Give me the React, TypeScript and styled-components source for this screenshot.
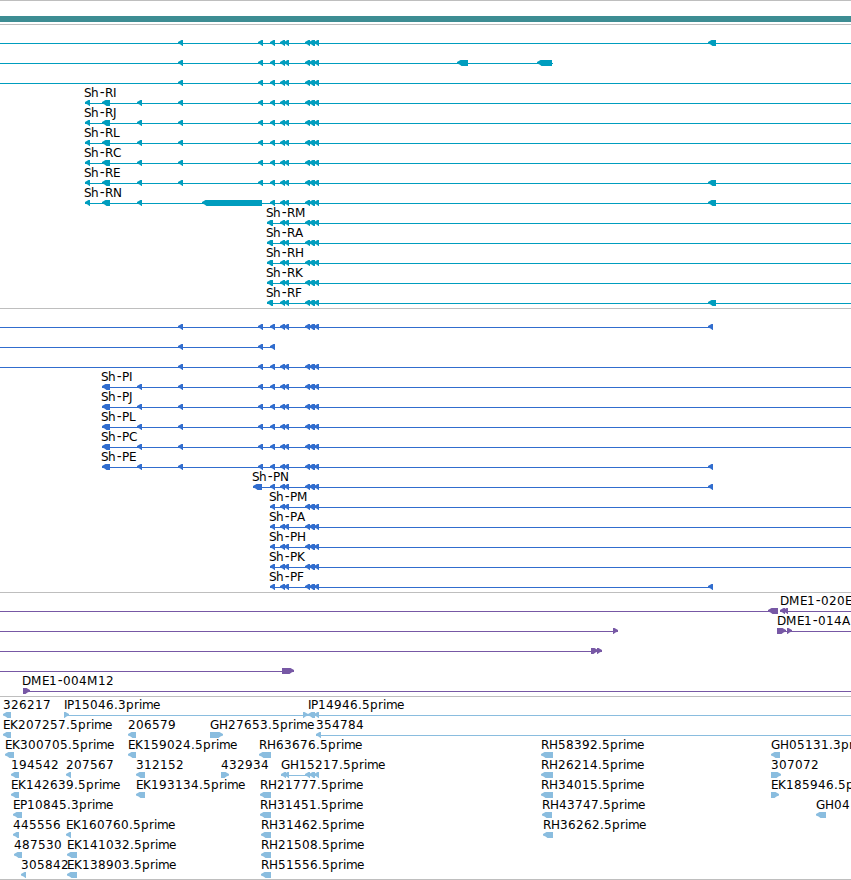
import React, { ReactElement } from 'react';
import styled, { createGlobalStyle } from 'styled-components';

type Span = [number, number];

interface Feature {
    label?: string;
    labelX?: number;
    from: number;
    to: number;
    forward?: boolean;
    exons: Span[];
}

type RowData = Feature[];

const VIEW_WIDTH = 851;
const ROW_HEIGHT = 20;

const TRIPLE: Span[] = [
    [305, 310],
    [309, 315],
    [314, 319],
];
const PAIR: Span[] = [
    [280, 285],
    [284, 289],
];
const TAIL: Span[] = [...PAIR, ...TRIPLE];
const CORE: Span[] = [[258, 263], [270, 275], ...TAIL];
const LONG: Span[] = [[178, 183], ...CORE];

const transcript = (
    label: string | undefined,
    from: number,
    to: number,
    exons: Span[]
): RowData => [{ label, labelX: from - 1, from, to, exons }];

const hit = (
    label: string,
    from: number,
    to: number,
    forward = false
): Feature => ({ label, from, to, forward, exons: [[from, to]] });

const RNA_HEAD: Span[] = [
    [85, 90],
    [102, 110],
    [137, 142],
];
const PROTEIN_HEAD: Span[] = [
    [102, 110],
    [137, 142],
];

const transcripts: RowData[] = [
    transcript(undefined, 0, VIEW_WIDTH, [...LONG, [708, 716]]),
    transcript(undefined, 0, 553, [...LONG, [457, 468], [537, 552]]),
    transcript(undefined, 0, VIEW_WIDTH, LONG),
    ...['Sh-RI', 'Sh-RJ', 'Sh-RL', 'Sh-RC'].map((name) =>
        transcript(name, 85, VIEW_WIDTH, [...RNA_HEAD, ...LONG])
    ),
    transcript('Sh-RE', 85, VIEW_WIDTH, [...RNA_HEAD, ...LONG, [708, 716]]),
    transcript('Sh-RN', 85, VIEW_WIDTH, [
        ...RNA_HEAD,
        [202, 262],
        [270, 275],
        ...TAIL,
        [708, 716],
    ]),
    ...['Sh-RM', 'Sh-RA', 'Sh-RH', 'Sh-RK'].map((name) =>
        transcript(name, 267, VIEW_WIDTH, [[267, 273], ...TAIL])
    ),
    transcript('Sh-RF', 267, VIEW_WIDTH, [[267, 273], ...TAIL, [708, 716]]),
];

const proteins: RowData[] = [
    transcript(undefined, 0, 713, [...LONG, [708, 713]]),
    transcript(undefined, 0, 275, [
        [178, 183],
        [258, 263],
        [270, 275],
    ]),
    transcript(undefined, 0, VIEW_WIDTH, LONG),
    ...['Sh-PI', 'Sh-PJ', 'Sh-PL', 'Sh-PC'].map((name) =>
        transcript(name, 102, VIEW_WIDTH, [...PROTEIN_HEAD, ...LONG])
    ),
    transcript('Sh-PE', 102, 713, [...PROTEIN_HEAD, ...LONG, [708, 713]]),
    transcript('Sh-PN', 253, 713, [
        [253, 262],
        [270, 275],
        ...TAIL,
        [708, 713],
    ]),
    ...['Sh-PM', 'Sh-PA', 'Sh-PH', 'Sh-PK'].map((name) =>
        transcript(name, 270, VIEW_WIDTH, [[270, 275], ...TAIL])
    ),
    transcript('Sh-PF', 270, 713, [[270, 275], ...TAIL, [708, 713]]),
];

const probes: RowData[] = [
    [
        { from: 0, to: 778, exons: [[768, 778]] },
        {
            label: 'DME1-020E',
            from: 780,
            to: VIEW_WIDTH,
            exons: [
                [780, 785],
                [783, 788],
            ],
        },
    ],
    [
        { from: 0, to: 618, forward: true, exons: [[613, 618]] },
        {
            label: 'DME1-014A',
            from: 777,
            to: VIEW_WIDTH,
            forward: true,
            exons: [
                [777, 786],
                [787, 792],
            ],
        },
    ],
    [
        {
            from: 0,
            to: 602,
            forward: true,
            exons: [
                [591, 598],
                [597, 602],
            ],
        },
    ],
    [{ from: 0, to: 294, forward: true, exons: [[282, 294]] }],
    [
        {
            label: 'DME1-004M12',
            labelX: 22,
            from: 23,
            to: VIEW_WIDTH,
            forward: true,
            exons: [[23, 30]],
        },
    ],
];

const ests: RowData[] = [
    [
        hit('326217', 3, 11),
        {
            label: 'IP15046.3prime',
            from: 64,
            to: 308,
            forward: true,
            exons: [
                [64, 69],
                [303, 308],
            ],
        },
        {
            label: 'IP14946.5prime',
            from: 308,
            to: VIEW_WIDTH,
            exons: [
                [308, 315],
                [314, 319],
            ],
        },
    ],
    [
        hit('EK207257.5prime', 3, 11),
        hit('206579', 128, 136),
        hit('GH27653.5prime', 210, 223, true),
        { label: '354784', from: 316, to: VIEW_WIDTH, exons: [[316, 321]] },
    ],
    [
        hit('EK300705.5prime', 5, 14),
        hit('EK159024.5prime', 128, 136),
        hit('RH63676.5prime', 259, 271),
        hit('RH58392.5prime', 541, 553),
        hit('GH05131.3prime', 771, 780),
    ],
    [
        hit('194542', 11, 19),
        hit('207567', 66, 71),
        hit('312152', 136, 145),
        hit('432934', 221, 229, true),
        {
            label: 'GH15217.5prime',
            from: 281,
            to: 319,
            exons: [[281, 286], [284, 289], ...TRIPLE],
        },
        hit('RH26214.5prime', 541, 553),
        hit('307072', 771, 781, true),
    ],
    [
        hit('EK142639.5prime', 11, 19),
        hit('EK193134.5prime', 136, 145),
        hit('RH21777.5prime', 260, 271),
        hit('RH34015.5prime', 541, 553),
        hit('EK185946.5prime', 771, 779, true),
    ],
    [
        hit('EP10845.3prime', 13, 22),
        hit('RH31451.5prime', 260, 271),
        hit('RH43747.5prime', 542, 552),
        hit('GH04', 816, 826),
    ],
    [
        hit('445556', 13, 19),
        hit('EK160760.5prime', 66, 71),
        hit('RH31462.5prime', 261, 271),
        hit('RH36262.5prime', 543, 553),
    ],
    [
        hit('487530', 14, 22),
        hit('EK141032.5prime', 67, 77),
        hit('RH21508.5prime', 261, 271),
    ],
    [
        hit('305842', 21, 26),
        hit('EK138903.5prime', 67, 77),
        hit('RH51556.5prime', 261, 271),
    ],
];

// Whole pixel advances, so that every glyph starts on a pixel boundary
const ADVANCES: Record<string, number> = {
    '-': 6,
    '.': 4,
    D: 9,
    E: 7,
    G: 9,
    H: 9,
    I: 3,
    M: 11,
    P: 7,
    S: 7,
    e: 7,
    i: 3,
    m: 11,
    r: 5,
};

const glyphPositions = (label: string, start: number): string => {
    let x = start;
    return label
        .split('')
        .map((char) => {
            const current = x;
            x += ADVANCES[char] ?? 8;
            return char === '-' ? current - 1 : current;
        })
        .join(' ');
};

const arrowPoints = ([start, end]: Span, forward?: boolean): string => {
    const tip = forward ? end : start;
    const base = forward ? start : end;
    const dir = forward ? -1 : 1;
    const at = (offset: number): number => tip + dir * offset;
    return [
        `${at(0)},16`,
        `${at(3.5)},14`,
        `${base},14`,
        `${base},20`,
        `${at(4.5)},20`,
        `${at(2.5)},18.5`,
        `${at(0)},17.6`,
    ].join(' ');
};

/**
 * One line of features: the intron line, the exons as arrows and the name
 *
 * @returns {ReactElement}
 */
const FeatureRow: React.FC<{ features: RowData }> = ({
    features,
}): ReactElement => (
    <RowCanvas width={VIEW_WIDTH} height={ROW_HEIGHT}>
        {features.map(({ label, labelX, from, to, forward, exons }) => (
            <g key={from}>
                {(exons.length > 1 || to - from > 20) && (
                    <Intron x={from} y={17} width={to - from} height={1} />
                )}
                {exons.map((exon) => (
                    <polygon
                        key={exon[0]}
                        points={arrowPoints(exon, forward)}
                    />
                ))}
                {label && (
                    <Label x={glyphPositions(label, labelX ?? from)} y={11}>
                        {label
                            .split(/(-)/)
                            .map((part, i) =>
                                part === '-' ? (
                                    <Dash key={i}>{part}</Dash>
                                ) : (
                                    part
                                )
                            )}
                    </Label>
                )}
            </g>
        ))}
    </RowCanvas>
);

const App: React.FC = (): ReactElement => (
    <>
        <GlobalStyle />
        <Browser>
            <Overview>
                <GeneBar />
            </Overview>
            <Track color='#009dbe'>
                {transcripts.map((row, i) => (
                    <FeatureRow key={i} features={row} />
                ))}
            </Track>
            <Track color='#316dce'>
                {proteins.map((row, i) => (
                    <FeatureRow key={i} features={row} />
                ))}
            </Track>
            <Track color='#7758a5'>
                {probes.map((row, i) => (
                    <FeatureRow key={i} features={row} />
                ))}
            </Track>
            <Track color='#8abddf'>
                {ests.map((row, i) => (
                    <FeatureRow key={i} features={row} />
                ))}
            </Track>
        </Browser>
    </>
);

export default App;

const GlobalStyle = createGlobalStyle`
    body {
        margin: 0;
        background: #fff;
    }
`;

const Browser = styled.main`
    box-sizing: border-box;
    width: 851px;
    height: 880px;
    overflow: hidden;
    border-bottom: 1px solid #bebebe;
`;

const Overview = styled.section`
    box-sizing: border-box;
    height: 24px;
    padding-top: 15px;
    border-top: 1px solid #bebebe;
`;

const GeneBar = styled.div`
    height: 6px;
    background: #3d8d93;
`;

const Track = styled.section<{ color: string }>`
    display: flex;
    flex-direction: column;
    padding: 1px 0 2px;
    border-top: 1px solid #bebebe;
    color: ${({ color }) => color};
`;

const RowCanvas = styled.svg`
    display: block;
    flex: none;
    fill: currentColor;
    overflow: hidden;
`;

const Intron = styled.rect`
    shape-rendering: crispEdges;
`;

const Label = styled.text`
    fill: #000;
    font-family: 'DejaVu Sans', sans-serif;
    font-size: 12px;
`;

const Dash = styled.tspan`
    font-family: 'DejaVu Sans Mono', monospace;
    font-size: 14px;
`;
